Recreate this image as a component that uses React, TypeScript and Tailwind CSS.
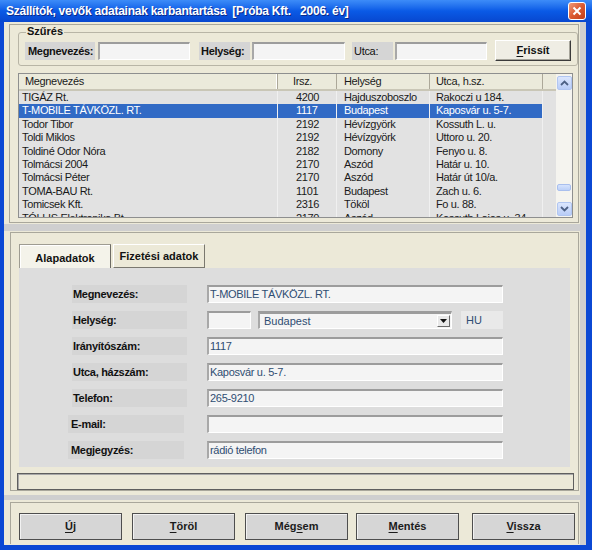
import React from "react";

type Row = { nev: string; irsz: string; hely: string; utca: string };

const ROWS: Row[] = [
  { nev: "TIGÁZ Rt.", irsz: "4200", hely: "Hajduszoboszlo", utca: "Rakoczi u 184." },
  { nev: "T-MOBILE TÁVKÖZL. RT.", irsz: "1117", hely: "Budapest", utca: "Kaposvár u. 5-7." },
  { nev: "Todor Tibor", irsz: "2192", hely: "Hévízgyörk", utca: "Kossuth L. u." },
  { nev: "Toldi Miklos", irsz: "2192", hely: "Hévízgyörk", utca: "Uttoro u. 20." },
  { nev: "Toldiné Odor Nóra", irsz: "2182", hely: "Domony", utca: "Fenyo u. 8." },
  { nev: "Tolmácsi 2004", irsz: "2170", hely: "Aszód", utca: "Határ u. 10." },
  { nev: "Tolmácsi Péter", irsz: "2170", hely: "Aszód", utca: "Határ út 10/a." },
  { nev: "TOMA-BAU Rt.", irsz: "1101", hely: "Budapest", utca: "Zach u. 6." },
  { nev: "Tomicsek Kft.", irsz: "2316", hely: "Tököl", utca: "Fo u. 88." },
  { nev: "TÓLLIS Elektronika Bt.", irsz: "2170", hely: "Aszód", utca: "Kossuth Lajos u. 34." },
];
const SELECTED = 1;

// sunken edit box, XP-classic look
const EDIT = "h-[18px] bg-[#f4f4f4] border-t-2 border-l-2 border-b border-r border-t-[#9c9c9c] border-l-[#a8a8a8] border-b-white border-r-white";
const LABEL = "h-[18px] bg-[#d5d5d5] font-bold text-[11px] tracking-[-0.3px] leading-[18px] text-[#111]";

function Chevron({ up }: { up?: boolean }) {
  return (
    <svg width="9" height="6" viewBox="0 0 9 6">
      <path d={up ? "M1 5 L4.5 1.5 L8 5" : "M1 1 L4.5 4.5 L8 1"} stroke="#4d6185" strokeWidth="1.8" fill="none" />
    </svg>
  );
}

function FormRow({ label, wide, children }: { label: string; wide?: boolean; children: React.ReactNode }) {
  return (
    <div className="flex h-[18px]">
      <div className={`${LABEL} ${wide ? "ml-[49px] w-[116px] pl-[3px] mr-[23px]" : "ml-[53px] w-[115px] pl-[1px] mr-[20px]"}`}>{label}</div>
      {children}
    </div>
  );
}

function Edit({ value, w = "w-[296px]" }: { value?: string; w?: string }) {
  return (
    <div className={`${EDIT} ${w} pl-[1px] text-[11px] tracking-[-0.3px] leading-[15px] text-[#2f4d72] overflow-hidden whitespace-nowrap`}>
      {value}
    </div>
  );
}

function Btn({ children, ml }: { children: React.ReactNode; ml: string }) {
  return (
    <div className={`${ml} w-[103px] h-[27px] bg-[#d6d6d6] border border-[#4e4e4e] shadow-[inset_1px_1px_0_#f2f2f2] flex items-center justify-center font-bold text-[11px] text-[#1b1b1b]`}>
      {children}
    </div>
  );
}

export default function App() {
  return (
    <div className="w-[592px] h-[550px] bg-[#0b48d4] overflow-hidden font-['Liberation_Sans',Arial,sans-serif] select-none">
      {/* title bar */}
      <div className="h-[22px] flex items-center pl-[6px] pr-[6px] bg-linear-to-b from-[#3d8cf8] via-[#0a5ae6] to-[#0847cf]">
        <span className="text-white text-[12px] font-bold tracking-[-0.25px] whitespace-pre [text-shadow:1px_1px_0_#0a2a8a]">
          {"Szállítók, vevők adatainak karbantartása  [Próba Kft.   2006. év]"}
        </span>
        <div className="ml-auto w-[18px] h-[18px] rounded-[3px] border border-white bg-linear-to-br from-[#f09a78] via-[#db5a30] to-[#c03e18] flex items-center justify-center">
          <svg width="10" height="10" viewBox="0 0 10 10">
            <path d="M1.5 1.5 L8.5 8.5 M8.5 1.5 L1.5 8.5" stroke="white" strokeWidth="2" />
          </svg>
        </div>
      </div>

      {/* client */}
      <div className="ml-[4px] w-[582px] h-[523px] bg-[#cfcfcf] flex flex-col">
        {/* filter + list panel */}
        <div className="h-[202px] w-[576px] bg-[#ece9d8] pt-[2px] pl-[5px]">
          <div className="w-[570px] h-[199px] border border-[#a9a79b]">
            <div className="relative ml-[8px] mt-[7px] w-[560px] h-[34px] border border-[#b8b5a6] rounded-[3px]">
              <span className="absolute left-[7px] top-[-8px] px-[1px] bg-[#ece9d8] text-[11px] font-bold leading-[13px] text-[#111]">Szűrés</span>
              <div className="flex items-start pt-[9px] pl-[6px]">
                <div className={`${LABEL} w-[70px] pl-[3px]`}>Megnevezés:</div>
                <div className={`${EDIT} ml-[3px] w-[92px]`} />
                <div className={`${LABEL} ml-[9px] w-[51px] pl-[2px]`}>Helység:</div>
                <div className={`${EDIT} ml-[2px] w-[93px]`} />
                <div className={`${LABEL} ml-[7px] w-[41px] pl-[2px] font-normal`}>Utca:</div>
                <div className={`${EDIT} ml-[2px] w-[92px]`} />
                <div className="ml-[8px] -mt-[2px] w-[76px] h-[21px] bg-[#efede4] border border-t-white border-l-white border-r-[#3a3a3a] border-b-[#3a3a3a] shadow-[inset_-1px_-1px_0_#a6a49a] flex items-center justify-center font-bold text-[11px] text-[#111]">
                  <span><u className="underline-offset-2">F</u>rissít</span>
                </div>
              </div>
            </div>

            {/* list */}
            <div className="ml-[8px] mt-[7px] w-[555px] h-[145px] border border-[#8e8f8f] bg-[#e2e2e2] flex text-[11px] tracking-[-0.35px] text-[#1a1a1a]">
              <div className="w-[537px] h-full overflow-hidden">
                <div className="h-[17px] flex bg-[#ebeadb] border-b-2 border-[#c9c6b6] leading-[15px]">
                  <div className="w-[259px] pl-[6px] border-r border-[#aca899] shadow-[inset_-1px_0_0_white]">Megnevezés</div>
                  <div className="w-[59px] pl-[15px] border-r border-[#aca899]">Irsz.</div>
                  <div className="w-[93px] pl-[7px] border-r border-[#aca899]">Helység</div>
                  <div className="w-[113px] pl-[6px] border-r border-[#aca899]">Utca, h.sz.</div>
                  <div className="flex-1" />
                </div>
                {ROWS.map((r, i) => {
                  const sel = i === SELECTED;
                  return (
                    <div key={r.nev} className={`h-[13.4px] leading-[13.4px] flex whitespace-nowrap ${sel ? "text-white" : ""}`}>
                      <div className={`w-[259px] pl-[3px] border-r border-[#f0f0f0] ${sel ? "bg-[#316ac5]" : ""}`}>{r.nev}</div>
                      <div className={`w-[59px] pl-[18px] border-r border-[#f0f0f0] ${sel ? "bg-[#316ac5]" : ""}`}>{r.irsz}</div>
                      <div className={`w-[93px] pl-[7px] border-r border-[#f0f0f0] ${sel ? "bg-[#316ac5]" : ""}`}>{r.hely}</div>
                      <div className={`w-[113px] pl-[6px] border-r border-[#f0f0f0] ${sel ? "bg-[#316ac5]" : ""}`}>{r.utca}</div>
                      <div className="flex-1" />
                    </div>
                  );
                })}
              </div>
              {/* scrollbar */}
              <div className="w-[16px] h-full bg-[#f5f4ef] flex flex-col items-center">
                <div className="mt-[2px] w-[15px] h-[14px] rounded-[2px] bg-linear-to-b from-[#dbe6fd] to-[#b9cdf7] border border-[#b1c6f1] flex items-center justify-center">
                  <Chevron up />
                </div>
                <div className="flex-1" />
                <div className="w-[14px] h-[7px] rounded-[2px] bg-linear-to-b from-[#d6e3fd] to-[#bcd0f8] border border-[#a9bfee]" />
                <div className="mt-[11px] mb-[1px] w-[15px] h-[14px] rounded-[2px] bg-linear-to-b from-[#dbe6fd] to-[#b9cdf7] border border-[#b1c6f1] flex items-center justify-center">
                  <Chevron />
                </div>
              </div>
            </div>
          </div>
        </div>

        <div className="h-[7px]" />

        {/* detail panel */}
        <div className="h-[264px] w-[576px] bg-[#ece9d8] pt-[1px] pl-[6px]">
          <div className="w-[569px] h-[259px] border border-[#a9a79b]">
            <div className="flex mt-[11px] ml-[8px] h-[24px]">
              <div className="w-[92px] h-[24px] bg-[#f4f3ea] border-t border-l border-[#9e9c92] border-r border-r-[#6d6b64] shadow-[inset_1px_1px_0_white] flex items-center justify-center pt-[3px] font-bold text-[11px] text-[#111]">
                Alapadatok
              </div>
              <div className="ml-[2px] w-[92px] h-[24px] bg-[#ece9d8] border border-t-white border-l-white border-r-[#7a786f] border-b-[#7a786f] flex items-center justify-center pt-[1px] font-bold text-[11px] text-[#111]">
                Fizetési adatok
              </div>
            </div>
            <div className="ml-[8px] w-[551px] h-[199px] bg-[#dddddd] pt-[17px] flex flex-col gap-[8px]">
              <FormRow label="Megnevezés:"><Edit value="T-MOBILE TÁVKÖZL. RT." /></FormRow>
              <FormRow label="Helység:">
                <Edit w="w-[44px]" />
                <div className={`${EDIT} border-t-[3px] ml-[7px] w-[194px] flex items-end justify-between pl-[4px] text-[11px] leading-[14px] text-[#2f4d72]`}>
                  <span className="self-center">Budapest</span>
                  <div className="w-[13px] h-[12px] mr-[1px] mb-[1px] bg-[#e8e8e8] border border-t-white border-l-white border-r-[#6a6a6a] border-b-[#6a6a6a] flex items-center justify-center">
                    <svg width="7" height="4" viewBox="0 0 7 4"><path d="M0 0 H7 L3.5 4 Z" fill="#111" /></svg>
                  </div>
                </div>
                <div className="ml-[9px] w-[42px] h-[18px] bg-[#e9e9e9] pl-[5px] text-[11px] leading-[18px] text-[#2f4d72]">HU</div>
              </FormRow>
              <FormRow label="Irányítószám:"><Edit value="1117" /></FormRow>
              <FormRow label="Utca, házszám:"><Edit value="Kaposvár u. 5-7." /></FormRow>
              <FormRow label="Telefon:"><Edit value="265-9210" /></FormRow>
              <FormRow label="E-mail:" wide><Edit /></FormRow>
              <FormRow label="Megjegyzés:" wide><Edit value="rádió telefon" /></FormRow>
            </div>
            <div className="mt-[6px] ml-[6px] w-[557px] h-[17px] bg-[#ece9d8] border border-[#5f5f5f] shadow-[inset_1px_1px_0_#a8a8a8]" />
          </div>
        </div>

        <div className="h-[5px]" />

        {/* buttons panel */}
        <div className="h-[45px] w-[576px] bg-[#ece9d8] pt-[2px] pl-[6px]">
          <div className="w-[569px] h-[42px] border-t border-l border-r border-[#a9a79b] pt-[10px] flex">
            <Btn ml="ml-[8px]"><span><u className="underline-offset-2">Ú</u>j</span></Btn>
            <Btn ml="ml-[10px]"><span><u className="underline-offset-2">T</u>öröl</span></Btn>
            <Btn ml="ml-[10px]"><span>Még<u className="underline-offset-2">s</u>em</span></Btn>
            <Btn ml="ml-[8px]"><span><u className="underline-offset-2">M</u>entés</span></Btn>
            <Btn ml="ml-[13px]"><span><u className="underline-offset-2">V</u>issza</span></Btn>
          </div>
        </div>
      </div>
    </div>
  );
}
